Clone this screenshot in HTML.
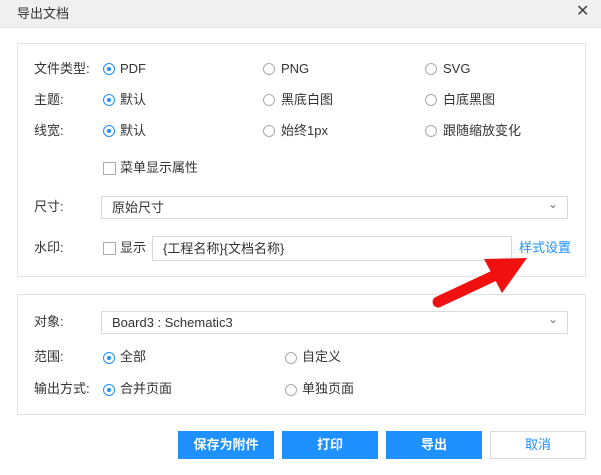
<!DOCTYPE html><html><head><meta charset="utf-8"><style>
body{margin:0;width:601px;height:475px;background:#fff;font-family:"Liberation Sans","Noto Sans CJK SC",sans-serif;font-size:13px;color:#333;position:relative;overflow:hidden}
.a{position:absolute;white-space:nowrap;line-height:16px}
.title{left:0;top:0;width:601px;height:27px;background:#f0f0f0;border-bottom:1px solid #e4e4e4}
.box{border:1px solid #e2e2e2;position:absolute}
.r{position:absolute;width:12px;height:12px;border:1px solid #aaa;border-radius:50%;box-sizing:border-box}
.r.on{border-color:#1e90ff}
.r.on::after{content:"";position:absolute;left:3px;top:3px;width:4px;height:4px;border-radius:50%;background:#1e90ff}
.cb{position:absolute;width:13px;height:13px;border:1px solid #aaa;box-sizing:border-box}
.sel{position:absolute;border:1px solid #d9d9d9;box-sizing:border-box;height:23px;line-height:21px;padding-left:10px}
.sel.d::after{content:"⌄";position:absolute;right:9px;top:-3px;color:#777;font-size:12px}
.btn{position:absolute;top:431px;width:96px;height:28px;background:#1e90ff;color:#fff;font-weight:bold;text-align:center;line-height:28px}
</style></head><body>
<div class="a title"></div>
<div class="a" style="left:17px;top:6px">导出文档</div>
<div class="a" style="left:576px;top:4px;font-size:16px;color:#444">✕</div>
<div class="box" style="left:17px;top:43px;width:567px;height:232px"></div>
<div class="box" style="left:17px;top:294px;width:567px;height:119px"></div>

<div class="a" style="left:34px;top:61px">文件类型:</div>
<div class="r on" style="left:103px;top:63px"></div><div class="a" style="left:120px;top:61px">PDF</div>
<div class="r" style="left:263px;top:63px"></div><div class="a" style="left:281px;top:61px">PNG</div>
<div class="r" style="left:425px;top:63px"></div><div class="a" style="left:443px;top:61px">SVG</div>

<div class="a" style="left:34px;top:92px">主题:</div>
<div class="r on" style="left:103px;top:94px"></div><div class="a" style="left:120px;top:92px">默认</div>
<div class="r" style="left:263px;top:94px"></div><div class="a" style="left:281px;top:92px">黑底白图</div>
<div class="r" style="left:425px;top:94px"></div><div class="a" style="left:443px;top:92px">白底黑图</div>

<div class="a" style="left:34px;top:123px">线宽:</div>
<div class="r on" style="left:103px;top:125px"></div><div class="a" style="left:120px;top:123px">默认</div>
<div class="r" style="left:263px;top:125px"></div><div class="a" style="left:281px;top:123px">始终1px</div>
<div class="r" style="left:425px;top:125px"></div><div class="a" style="left:443px;top:123px">跟随缩放变化</div>

<div class="cb" style="left:103px;top:162px"></div><div class="a" style="left:120px;top:160px">菜单显示属性</div>

<div class="a" style="left:34px;top:199px">尺寸:</div>
<div class="sel d" style="left:101px;top:196px;width:467px">原始尺寸</div>

<div class="a" style="left:34px;top:240px">水印:</div>
<div class="cb" style="left:103px;top:242px"></div><div class="a" style="left:120px;top:240px">显示</div>
<div class="sel" style="left:152px;top:236px;width:360px;height:25px;line-height:23px">{工程名称}{文档名称}</div>
<div class="a" style="left:519px;top:240px;color:#1e90ff">样式设置</div>

<div class="a" style="left:34px;top:314px">对象:</div>
<div class="sel d" style="left:101px;top:311px;width:467px">Board3 : Schematic3</div>

<div class="a" style="left:34px;top:349px">范围:</div>
<div class="r on" style="left:103px;top:352px"></div><div class="a" style="left:120px;top:349px">全部</div>
<div class="r" style="left:285px;top:352px"></div><div class="a" style="left:302px;top:349px">自定义</div>

<div class="a" style="left:34px;top:381px">输出方式:</div>
<div class="r on" style="left:103px;top:384px"></div><div class="a" style="left:120px;top:381px">合并页面</div>
<div class="r" style="left:285px;top:384px"></div><div class="a" style="left:302px;top:381px">单独页面</div>

<div class="btn" style="left:178px">保存为附件</div>
<div class="btn" style="left:282px">打印</div>
<div class="btn" style="left:386px">导出</div>
<div class="btn" style="left:490px;background:#fff;border:1px solid #d9d9d9;box-sizing:border-box;color:#1e90ff;font-weight:normal;line-height:26px">取消</div>

<svg class="a" style="left:0;top:0" width="601" height="475">
<line x1="438" y1="302" x2="500" y2="273" stroke="#f01010" stroke-width="11" stroke-linecap="round"/>
<polygon points="484,259 527,258 502,293" fill="#f01010"/>
</svg>
</body></html>
